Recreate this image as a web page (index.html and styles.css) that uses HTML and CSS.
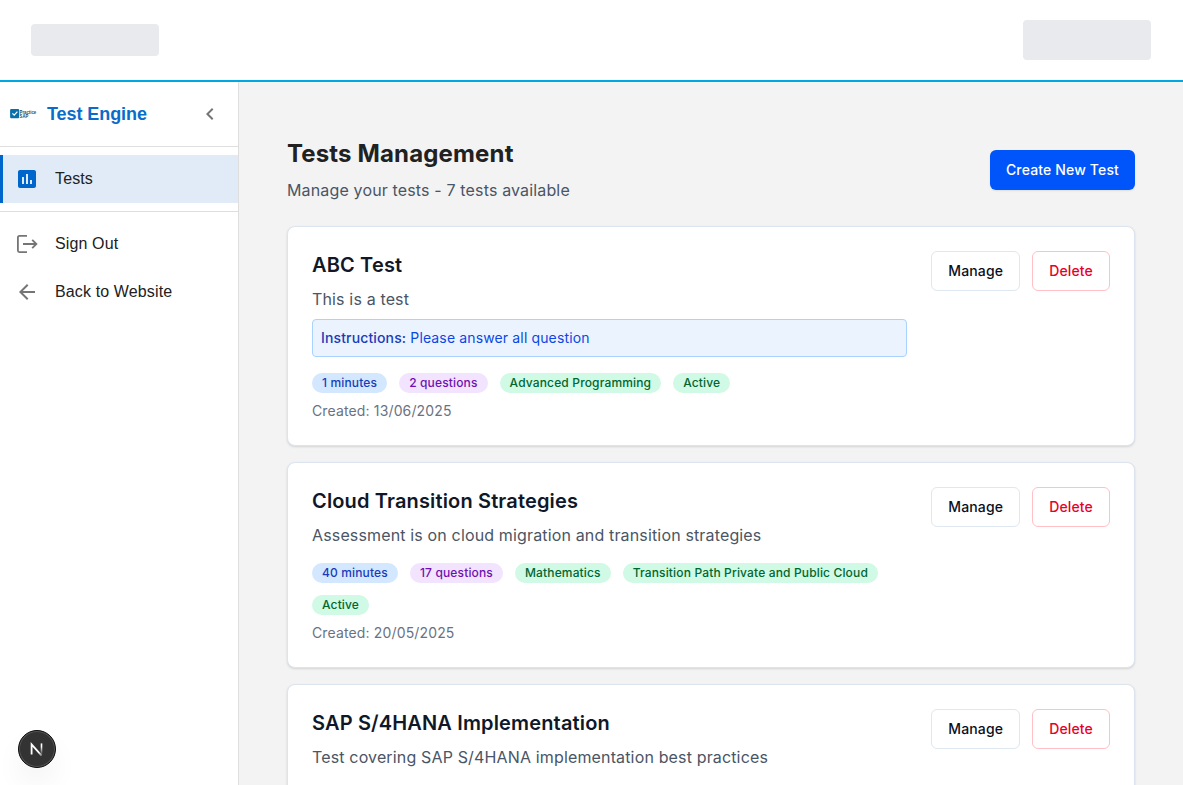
FILE: index.html
```html
<!DOCTYPE html>
<html lang="en">
<head>
<meta charset="utf-8">
<title>Tests Management</title>
<link rel="stylesheet" href="styles.css">
</head>
<body>
<div class="app">
  <header class="topbar">
    <div class="skeleton skeleton-logo"></div>
    <div class="skeleton skeleton-user"></div>
  </header>
  <div class="shell">
    <aside class="sidebar">
      <div class="brand">
        <svg class="brand-logo" viewBox="0 0 28 12" width="28" height="12">
          <rect x="0.1" y="1" width="9" height="9.200" rx="1" fill="#0870a8"/>
          <path d="M2.400 5.400l1.800 1.800 3.200-3.600" fill="none" stroke="#fff" stroke-width="1.200"/>
          <text class="logo-text" x="9.600" y="5.600" textLength="16.600" lengthAdjust="spacingAndGlyphs">Practice</text>
          <text class="logo-text" x="9.600" y="9.800" textLength="8.600" lengthAdjust="spacingAndGlyphs">SAP</text>
        </svg>
        <span class="brand-name">Test Engine</span>
        <svg class="chevron" viewBox="0 0 24 24" width="24" height="24"><path d="M15.41 7.41 14 6l-6 6 6 6 1.41-1.41L10.83 12z"/></svg>
      </div>
      <nav class="nav nav-main">
        <a class="nav-item active">
          <svg class="nav-icon" viewBox="0 0 24 24"><path d="M19 3H5c-1.1 0-2 .9-2 2v14c0 1.1.9 2 2 2h14c1.1 0 2-.9 2-2V5c0-1.1-.9-2-2-2M9 17H7v-7h2zm4 0h-2V7h2zm4 0h-2v-4h2z"/></svg>
          <span>Tests</span>
        </a>
      </nav>
      <nav class="nav">
        <a class="nav-item">
          <svg class="nav-icon nav-icon-line" viewBox="0 0 24 24"><path d="M12 3.900H4.400Q2.900 3.900 2.900 5.400V18.600Q2.900 20.100 4.400 20.100H12M8 12H21M17.200 7.800L21.400 12L17.200 16.200"/></svg>
          <span>Sign Out</span>
        </a>
        <a class="nav-item">
          <svg class="nav-icon" viewBox="0 0 24 24"><path d="M20 11H7.83l5.59-5.59L12 4l-8 8 8 8 1.410-1.410L7.830 13H20z"/></svg>
          <span>Back to Website</span>
        </a>
      </nav>
    </aside>
    <main class="content">
      <div class="page-head">
        <div>
          <h1 class="page-title">Tests Management</h1>
          <p class="page-sub">Manage your tests - 7 tests available</p>
        </div>
        <button class="btn btn-primary">Create New Test</button>
      </div>
      <div class="cards">
        <article class="card">
          <div class="info">
            <h2 class="card-title">ABC Test</h2>
            <p class="desc">This is a test</p>
            <div class="note"><strong>Instructions:</strong> Please answer all question</div>
            <div class="tags">
              <span class="tag blue">1 minutes</span><span class="tag purple">2 questions</span><span class="tag green">Advanced Programming</span><span class="tag green">Active</span>
            </div>
            <p class="created">Created: 13/06/2025</p>
          </div>
          <div class="actions"><button class="btn btn-manage">Manage</button><button class="btn btn-delete">Delete</button></div>
        </article>
        <article class="card">
          <div class="info">
            <h2 class="card-title">Cloud Transition Strategies</h2>
            <p class="desc">Assessment is on cloud migration and transition strategies</p>
            <div class="tags">
              <span class="tag blue">40 minutes</span><span class="tag purple">17 questions</span><span class="tag green">Mathematics</span><span class="tag green">Transition Path Private and Public Cloud</span><span class="tag green">Active</span>
            </div>
            <p class="created">Created: 20/05/2025</p>
          </div>
          <div class="actions"><button class="btn btn-manage">Manage</button><button class="btn btn-delete">Delete</button></div>
        </article>
        <article class="card card-last">
          <div class="info">
            <h2 class="card-title">SAP S/4HANA Implementation</h2>
            <p class="desc">Test covering SAP S/4HANA implementation best practices</p>
          </div>
          <div class="actions"><button class="btn btn-manage">Manage</button><button class="btn btn-delete">Delete</button></div>
        </article>
      </div>
    </main>
  </div>
  <div class="dev-badge">
    <svg viewBox="0 0 38 38" width="38" height="38">
      <defs>
        <linearGradient id="fade-stem" x1="0" y1="13" x2="0" y2="25" gradientUnits="userSpaceOnUse"><stop offset="0.3" stop-color="#fff"/><stop offset="1" stop-color="#fff" stop-opacity="0"/></linearGradient>
        <linearGradient id="fade-diagonal" x1="19" y1="19" x2="25" y2="26" gradientUnits="userSpaceOnUse"><stop offset="0.4" stop-color="#fff"/><stop offset="1" stop-color="#fff" stop-opacity="0.2"/></linearGradient>
      </defs>
      <path d="M13.600 24.600V14.300L23.600 25.600" fill="none" stroke="url(#fade-diagonal)" stroke-width="1.800"/>
      <path d="M23.500 13.400V24.600" stroke="url(#fade-stem)" stroke-width="1.600"/>
    </svg>
  </div>
</div>
</body>
</html>
```
FILE: styles.css
```css
* { box-sizing: border-box; }
body { margin: 0; font-family: Inter, sans-serif; color: #212121; }
h1, h2, p { margin: 0; }
.app { height: 785px; overflow: hidden; display: flex; flex-direction: column; background: #fff; }
.topbar { flex: none; height: 82px; padding: 0 32px 0 31px; border-bottom: 2px solid #00a8e1; display: flex; align-items: center; justify-content: space-between; }
.skeleton { width: 128px; border-radius: 4px; background: #e8eaee; }
.skeleton-logo { height: 32px; }
.skeleton-user { height: 40px; }
.shell { flex: 1; min-height: 0; display: flex; }
.sidebar { flex: none; width: 239px; border-right: 1px solid #dedede; background: #fff; font-family: "Liberation Sans", Arial, sans-serif; }
.brand { height: 65px; border-bottom: 1px solid #dedede; display: flex; align-items: center; padding: 0 16px 0 10px; }
.brand-logo { flex: none; }
.logo-text { font: bold 5px "Liberation Sans", sans-serif; fill: #164f70; }
.brand-name { margin-left: 9px; flex: 1; font-size: 18px; font-weight: 700; letter-spacing: -0.07px; color: #0a6cca; white-space: nowrap; }
.chevron { width: 24px; height: 24px; fill: #757575; }
.nav { padding: 8px 0; }
.nav-main { border-bottom: 1px solid #dedede; }
.nav-item { height: 48px; display: flex; align-items: center; gap: 16px; padding-left: 15px; font-size: 16px; letter-spacing: 0.13px; color: #212121; }
.nav-item.active { background: #e0ebf7; border-left: 3px solid #0066cc; padding-left: 12px; }
.nav-icon { width: 24px; height: 24px; fill: #757575; }
.nav-icon-line { fill: none; stroke: #757575; stroke-width: 1.8; }
.active .nav-icon { fill: #0066cc; }
.content { flex: 1; min-width: 0; padding: 56px 48px 0; background: #f3f3f3; overflow: hidden; }
.page-head { display: flex; justify-content: space-between; align-items: center; margin-bottom: 24px; }
.page-title { font-size: 24px; line-height: 32px; font-weight: 700; letter-spacing: 0.15px; }
.page-sub { margin-top: 8px; font-size: 16px; line-height: 24px; letter-spacing: 0.15px; color: #4a5565; }
.btn { height: 40px; padding: 0 16px; border-radius: 6px; font: 500 14px/20px Inter, sans-serif; letter-spacing: 0.15px; background: #fff; border: 1px solid #dfe7f0; white-space: nowrap; }
.btn-primary { background: #0055fa; border: 0; color: #fff; box-shadow: 0 1px 2px rgba(0, 0, 0, 0.08); }
.btn-manage { color: #0a0f1f; }
.btn-delete { color: #e7002a; border-color: #ffc0c6; }
.cards { display: flex; flex-direction: column; gap: 16px; }
.card { display: flex; justify-content: space-between; align-items: flex-start; gap: 24px; padding: 24px; background: #fff; border: 1px solid #dce5ef; border-radius: 8px; box-shadow: 0 1px 3px rgba(0, 0, 0, 0.08), 0 1px 2px rgba(0, 0, 0, 0.06); }
.card-last { height: 206px; }
.info { flex: 1; min-width: 0; }
.card-title { font-size: 20px; line-height: 28px; font-weight: 600; letter-spacing: 0.15px; color: #101828; }
.desc { margin-top: 8px; font-size: 16px; line-height: 24px; letter-spacing: 0.15px; color: #4a5565; }
.note { margin-top: 8px; padding: 8px; border: 1px solid #a9d2ff; border-radius: 4px; background: #ebf3fe; font-size: 14px; line-height: 20px; letter-spacing: 0.14px; color: #0b47e4; }
.note strong { font-weight: 500; color: #193cb8; }
.tags { margin-top: 16px; display: flex; flex-wrap: wrap; gap: 12px; }
.tag { height: 20px; padding: 0 10px; border-radius: 10px; font-size: 12px; line-height: 20px; font-weight: 500; letter-spacing: 0.15px; white-space: nowrap; }
.blue { background: #d3e7ff; color: #193cb8; }
.purple { background: #f2e4fe; color: #6e11b0; }
.green { background: #d0fae5; color: #016630; }
.created { margin-top: 8px; font-size: 14px; line-height: 20px; letter-spacing: 0.14px; color: #6a7282; }
.actions { display: flex; gap: 12px; }
.dev-badge { position: absolute; left: 18px; top: 730px; width: 38px; height: 38px; border-radius: 50%; background: #333; border: 1px solid #0e0e0e; box-shadow: inset 0 0 0 1px #555, 0 16px 32px -8px rgba(0, 0, 0, 0.14); }
.dev-badge svg { display: block; margin: -1px; }
```
